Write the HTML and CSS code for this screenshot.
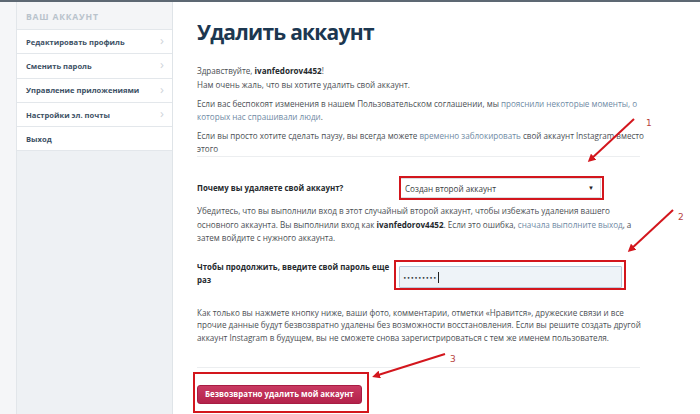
FILE: index.html
```html
<!DOCTYPE html>
<html lang="ru">
<head>
<meta charset="utf-8">
<title>Удалить аккаунт</title>
<link rel="stylesheet" href="styles.css">
</head>
<body>
<div class="topbar"></div>
<div class="layout">
  <div class="gutter"></div>
  <nav class="sidebar">
    <div class="side-head">Ваш аккаунт</div>
    <ul class="side-list">
      <li class="side-item"><span>Редактировать профиль</span><span class="chev">›</span></li>
      <li class="side-item"><span>Сменить пароль</span><span class="chev">›</span></li>
      <li class="side-item"><span>Управление приложениями</span><span class="chev">›</span></li>
      <li class="side-item"><span>Настройки эл. почты</span><span class="chev">›</span></li>
      <li class="side-item"><span>Выход</span></li>
    </ul>
  </nav>
  <main class="main">
    <h1 class="title">Удалить аккаунт</h1>
    <p class="text greet">Здравствуйте, <b>ivanfedorov4452</b>!</p>
    <p class="text sorry">Нам очень жаль, что вы хотите удалить свой аккаунт.</p>
    <p class="text terms">Если вас беспокоят изменения в нашем Пользовательском соглашении, мы <a href="#">прояснили некоторые моменты, о которых нас спрашивали люди</a>.</p>
    <p class="text pause">Если вы просто хотите сделать паузу, вы всегда можете <a href="#">временно заблокировать</a> свой аккаунт Instagram вместо этого</p>
    <hr class="sep sep-top">
    <div class="form-row row-reason">
      <label class="label">Почему вы удаляете свой аккаунт?</label>
      <div class="select mark mark-select">
        <span>Создан второй аккаунт</span>
        <span class="caret">▼</span>
      </div>
    </div>
    <p class="text note">Убедитесь, что вы выполнили вход в этот случайный второй аккаунт, чтобы избежать удаления вашего основного аккаунта. Вы выполнили вход как <b>ivanfedorov4452</b>. Если это ошибка, <a href="#">сначала выполните выход</a>, а затем войдите с нужного аккаунта.</p>
    <div class="form-row row-pass">
      <label class="label label-pass">Чтобы продолжить, введите свой пароль еще раз</label>
      <div class="password mark mark-pass">
        <span class="dots">•••••••••</span><span class="cursor"></span>
      </div>
    </div>
    <p class="text warn">Как только вы нажмете кнопку ниже, ваши фото, комментарии, отметки «Нравится», дружеские связи и все прочие данные будут безвозвратно удалены без возможности восстановления. Если вы решите создать другой аккаунт Instagram в будущем, вы не сможете снова зарегистрироваться с тем же именем пользователя.</p>
    <hr class="sep sep-bottom">
    <div class="actions">
      <span class="mark mark-btn"><button class="danger" type="button">Безвозвратно удалить мой аккаунт</button></span>
    </div>
  </main>
</div>

<svg class="annotations" width="700" height="414" viewBox="0 0 700 414">
  <defs>
    <marker id="head" markerWidth="8" markerHeight="8" refX="5" refY="4" orient="auto" markerUnits="userSpaceOnUse">
      <path d="M0,0 L8,4 L0,8 Z" fill="#d3161d"/>
    </marker>
  </defs>
  <g stroke="#d3161d" stroke-width="2" fill="none">
    <line x1="634" y1="119" x2="590" y2="160" marker-end="url(#head)"/>
    <line x1="673" y1="210" x2="630" y2="250" marker-end="url(#head)"/>
    <line x1="445" y1="354" x2="375" y2="376" marker-end="url(#head)"/>
  </g>
  <g class="num">
    <text x="646" y="126">1</text>
    <text x="678" y="220">2</text>
    <text x="450" y="362">3</text>
  </g>
</svg>
</body>
</html>
```

FILE: styles.css
```css
* { box-sizing: border-box; }

html, body {
  margin: 0;
  padding: 0;
  height: 100%;
}

body {
  background: #ffffff;
  font-family: "Open Sans", "Noto Sans", sans-serif;
  color: #4b4f54;
  overflow: hidden;
  position: relative;
}

.topbar {
  height: 2px;
  background: #5d6873;
}

.layout {
  display: flex;
  height: 412px;
}

/* page gutter left of the menu */
.gutter {
  width: 17px;
  background: #f5f6f8;
  border-right: 1px solid #e2e6ea;
}

/* settings menu */
.sidebar {
  width: 156px;
  background: #eef1f4;
  border-right: 1px solid #dfe4e8;
}

.side-head {
  height: 28px;
  padding: 2px 9px 0;
  display: flex;
  align-items: center;
  background: #f4f5f7;
  border-bottom: 1px solid #e3e7eb;
  color: #b9c3cc;
  font-weight: 700;
  font-size: 8.6px;
  letter-spacing: 0.8px;
  text-transform: uppercase;
}

.side-list {
  list-style: none;
  margin: 0;
  padding: 0;
}

.side-item {
  height: 24.3px;
  padding: 0 8px 0 9px;
  display: flex;
  align-items: center;
  justify-content: space-between;
  background: #ffffff;
  border-bottom: 1px solid #e3e7eb;
  color: #3c5064;
  font-weight: 700;
  font-size: 7.6px;
}

.chev {
  color: #cfd5db;
  font-size: 13px;
  font-weight: 400;
  line-height: 1;
  margin-top: -2px;
}

/* content column */
.main {
  flex: 1;
  padding: 0 54px 0 24px;
}

.title {
  margin: 17px 0 0;
  font-size: 21px;
  line-height: 26px;
  font-weight: 700;
  color: #1c3750;
  letter-spacing: -0.75px;
}

.text {
  margin: 0;
  font-size: 8.1px;
  line-height: 13px;
}

.text b {
  color: #262a2e;
  font-weight: 700;
}

.text a {
  color: #6f8aa4;
  text-decoration: none;
}

.greet { margin-top: 18.5px; }
.sorry { margin-top: 1px; }
.terms { margin-top: 6px; }
.pause { margin-top: 6px; }

.sep {
  border: 0;
  border-top: 1px solid #eceef0;
  margin: 0 6px 0 0;
}

.sep-top { margin-top: 1.5px; }

/* form rows */
.form-row {
  display: flex;
  align-items: flex-start;
}

.row-reason {
  margin-top: 21px;
  align-items: center;
}

.label {
  width: 203px;
  flex: none;
  font-size: 7.9px;
  line-height: 12.5px;
  font-weight: 700;
  color: #262a2e;
  padding-right: 2px;
}

.select {
  width: 201px;
  height: 20px;
  padding: 0 6px 0 4px;
  display: flex;
  align-items: center;
  justify-content: space-between;
  background: #ffffff;
  border: 1px solid #dadde1;
  font-size: 8.1px;
  color: #3a3e42;
}

.caret {
  font-size: 6px;
  color: #222;
}

.note {
  margin-top: 6.25px;
  line-height: 13.5px;
}

.row-pass {
  margin-top: 16.25px;
}

.password {
  width: 223px;
  height: 22px;
  margin-top: 5px;
  margin-left: -1px;
  padding: 0 3px;
  display: flex;
  align-items: center;
  background: #eef3f8;
  border: 1px solid #b9cbdc;
  border-radius: 1px;
}

.dots {
  font-family: "DejaVu Sans", sans-serif;
  font-size: 6px;
  letter-spacing: 0.2px;
  color: #2a2e33;
}

.cursor {
  width: 1px;
  height: 11px;
  margin-left: 1px;
  background: #222;
}

.warn {
  margin-top: 18.75px;
  line-height: 12.5px;
}

.sep-bottom {
  margin-top: 22.75px;
}

.actions {
  padding-top: 12px;
}

.danger {
  display: block;
  height: 19px;
  padding: 0 7px;
  border: 1px solid #a81c43;
  border-radius: 3px;
  background: linear-gradient(#c93a62, #b3224b);
  color: #ffffff;
  font-family: "Open Sans", "Noto Sans", sans-serif;
  font-weight: 700;
  font-size: 7.9px;
  white-space: nowrap;
  cursor: pointer;
}

/* red highlight frames drawn over the fields */
.mark { position: relative; }

.mark::after {
  content: "";
  position: absolute;
  border: 2px solid #d3161d;
  pointer-events: none;
}

.mark-select::after { top: -3px; left: -2px; right: -4px; bottom: -3px; }
.mark-pass::after { top: -7px; left: -6px; right: -5px; bottom: -3px; }
.mark-btn { display: inline-block; }
.mark-btn::after { top: -13px; left: -4px; right: -7px; bottom: -9px; }

/* arrows layer */
.annotations {
  position: absolute;
  left: 0;
  top: 0;
  pointer-events: none;
}

.num text {
  font-family: "DejaVu Sans", sans-serif;
  font-size: 9px;
  fill: #b8423d;
}
```
